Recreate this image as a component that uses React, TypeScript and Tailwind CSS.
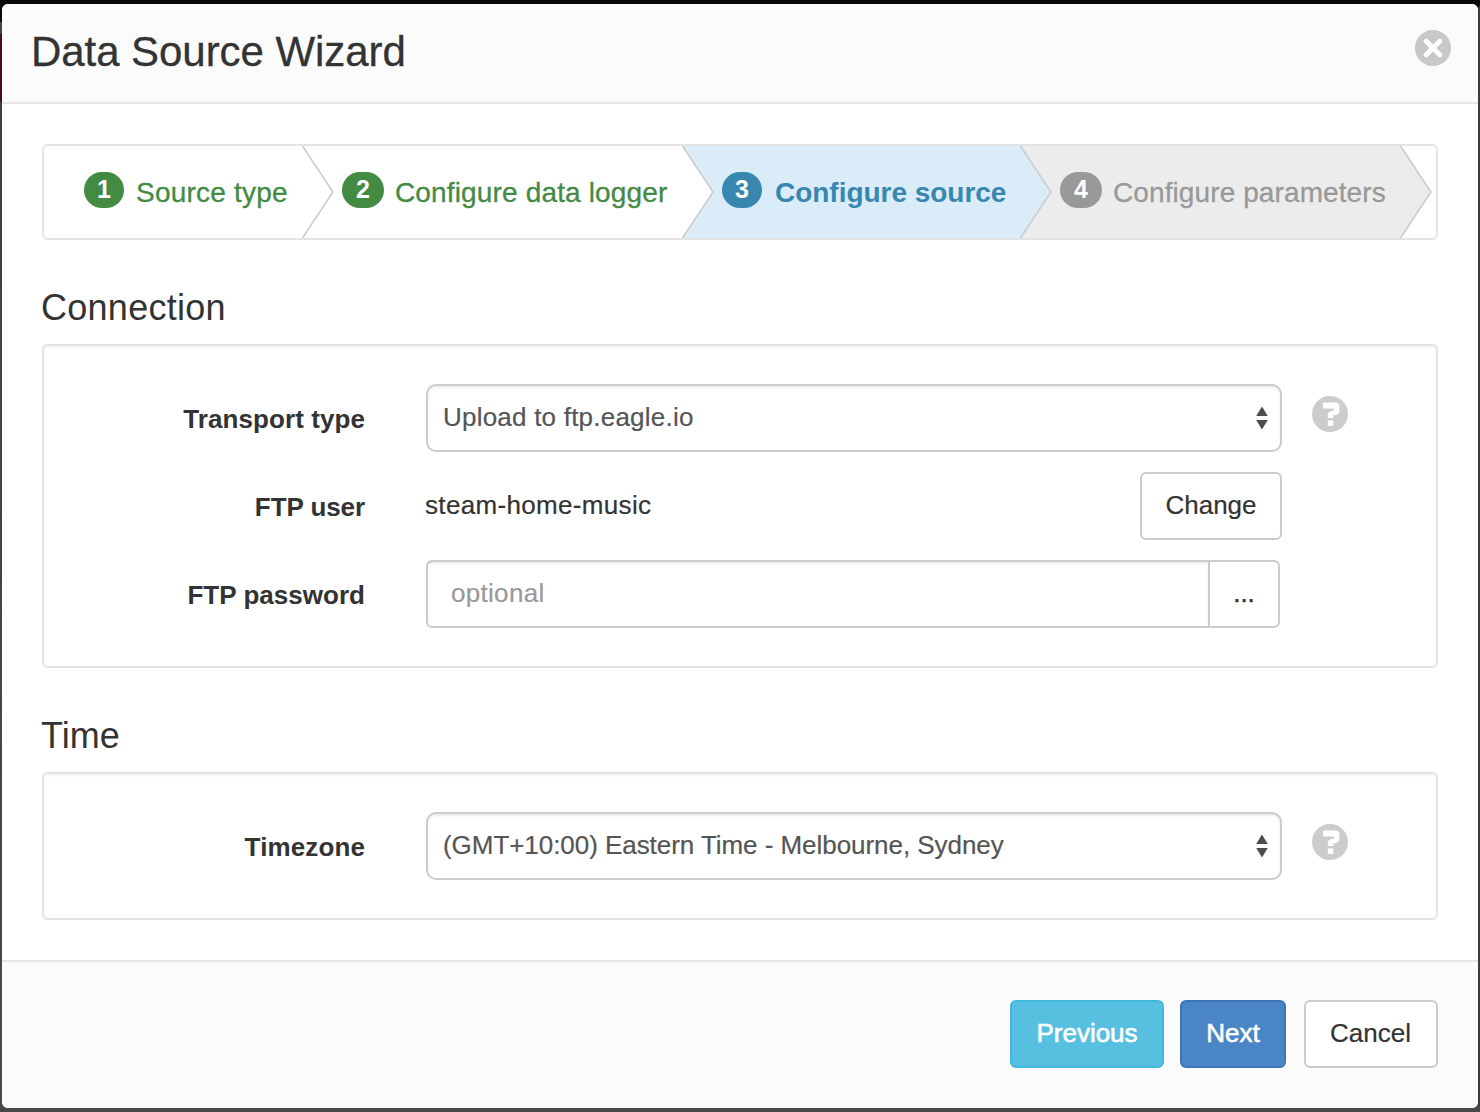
import React from "react";

type Step = {
  n: number;
  label: string;
  box: string;
  badge: string;
  text: string;
  fill: string;
  next: string;
};

const steps: Step[] = [
  { n: 1, label: "Source type", box: "w-[258px] pl-[40px] bg-white", badge: "w-[40px] bg-[#438a43] mr-[12px]", text: "text-[#438a43] tracking-[0.22px] [-webkit-text-stroke:0.3px]", fill: "#ffffff", next: "#ffffff" },
  { n: 2, label: "Configure data logger", box: "w-[348px] pl-[8px] bg-white", badge: "w-[42px] bg-[#438a43] mr-[11px]", text: "text-[#438a43] tracking-[0.15px] [-webkit-text-stroke:0.3px]", fill: "#ffffff", next: "#d9ecf8" },
  { n: 3, label: "Configure source", box: "w-[306px] pl-[8px] bg-[#d9ecf8]", badge: "w-[40px] bg-[#3887b0] mr-[13px]", text: "text-[#3887b0] font-bold tracking-[-0.03px]", fill: "#d9ecf8", next: "#ececec" },
  { n: 4, label: "Configure parameters", box: "w-[348px] pl-[8px] bg-[#ececec]", badge: "w-[42px] bg-[#999999] mr-[11px]", text: "text-[#999999] tracking-[0.1px] [-webkit-text-stroke:0.3px]", fill: "#ececec", next: "#ffffff" },
];

function Chevron({ fill, next }: { fill: string; next: string }) {
  return (
    <svg width="32" height="92" viewBox="0 0 32 92" className="shrink-0">
      <rect width="32" height="92" fill={next} />
      <path d="M0 0H0.5L31 46L0.5 92H0Z" fill={fill} />
      <path d="M0.5 0L31 46L0.5 92" fill="none" stroke="#cccccc" strokeWidth="1.6" />
    </svg>
  );
}

function Help() {
  return (
    <svg width="36" height="36" viewBox="0 0 36 36" className="ml-[30px] mb-[8px] shrink-0">
      <circle cx="18" cy="18" r="18" fill="#cccccc" />
      <path d="M11 6.6H25L27.4 9V16.4L24.4 19.2H21.4V22H15.8V17.6L18.6 15H21.6V12.4H11Z" fill="#fff" />
      <path d="M15.8 24.4H21.2V30H15.8Z" fill="#fff" />
    </svg>
  );
}

function Select({ value, className }: { value: string; className: string }) {
  return (
    <div className="flex h-[68px] w-[856px] items-center justify-between rounded-[10px] border-2 border-[#cccccc] bg-white pr-[12px] pl-[15px] shadow-[inset_0_2px_2px_rgba(0,0,0,0.075)]">
      <span className={"mb-[2px] text-[26px] text-[#555555] " + className}>{value}</span>
      <svg width="12" height="24" viewBox="0 0 12 24">
        <path d="M6 0.5L11.8 10H0.2ZM6 23.5L11.8 14H0.2Z" fill="#4d4d4d" />
      </svg>
    </div>
  );
}

function Row({ label, className, children }: { label: string; className: string; children: React.ReactNode }) {
  return (
    <div className="flex h-[68px] items-center">
      <div className={"mt-[2px] mr-[61px] w-[321px] text-right text-[26px] font-bold text-[#333333] " + className}>{label}</div>
      {children}
    </div>
  );
}

export default function App() {
  return (
    <div className="h-[1112px] w-[1480px] overflow-hidden bg-[linear-gradient(#0a0a0a_22px,#444_22px,#444_34px,#4a0d14_34px,#4a0d14_102px,#404040_102px,#484848)] px-[2px] pt-[4px] font-['Liberation_Sans',Arial,sans-serif] whitespace-nowrap">
      <div className="flex h-[1104px] flex-col overflow-hidden rounded-[6px] bg-white shadow-[1476px_0_0_#3c3c3c]">
        <header className="flex h-[100px] items-center justify-between border-b-2 border-[#e5e5e5] bg-[#fbfbfb] pr-[27px] pb-[3px] pl-[29px]">
          <h1 className="text-[42px] tracking-[-0.06px] text-[#333333] [-webkit-text-stroke:0.3px]">Data Source Wizard</h1>
          <svg width="36" height="36" viewBox="0 0 36 36" className="mb-[7px]">
            <circle cx="18" cy="18" r="18" fill="#c8c8c8" />
            <path d="M11.2 11.2L24.8 24.8M24.8 11.2L11.2 24.8" stroke="#fff" strokeWidth="5" strokeLinecap="round" />
          </svg>
        </header>

        <main className="flex h-[856px] flex-col px-[40px] pt-[40px]">
          <nav className="flex h-[96px] shrink-0 overflow-hidden rounded-[6px] border-2 border-[#e3e3e3] bg-white">
            {steps.map((s) => (
              <React.Fragment key={s.n}>
                <div className={"flex shrink-0 items-center " + s.box}>
                  <span className={"mb-[4px] flex h-[36px] items-center justify-center rounded-[20px] pb-[1px] text-[25px] font-bold text-white " + s.badge}>{s.n}</span>
                  <span className={"mt-[2px] text-[28px] " + s.text}>{s.label}</span>
                </div>
                <Chevron fill={s.fill} next={s.next} />
              </React.Fragment>
            ))}
          </nav>

          <h2 className="mt-[48px] -ml-[1px] h-[56px] text-[36px] leading-[40px] tracking-[0.27px] text-[#333333]">Connection</h2>
          <section className="flex h-[324px] shrink-0 flex-col gap-[20px] rounded-[6px] border-2 border-[#e3e3e3] pt-[38px] shadow-[inset_0_2px_2px_rgba(0,0,0,0.04)]">
            <Row label="Transport type" className="tracking-[0.08px]">
              <Select value="Upload to ftp.eagle.io" className="tracking-[0.22px] [-webkit-text-stroke:0.2px]" />
              <Help />
            </Row>
            <Row label="FTP user" className="tracking-[-0.08px]">
              <div className="flex w-[856px] items-center justify-between">
                <span className="-ml-[1px] mb-[2px] text-[26px] tracking-[0.33px] text-[#333333] [-webkit-text-stroke:0.2px]">steam-home-music</span>
                <button className="h-[68px] w-[142px] rounded-[6px] border-2 border-[#cccccc] bg-white pb-[2px] text-[26px] text-[#333333] [-webkit-text-stroke:0.2px]">Change</button>
              </div>
            </Row>
            <Row label="FTP password" className="tracking-[0.03px]">
              <div className="flex h-[68px] w-[854px] rounded-[6px] border-2 border-[#cccccc] bg-white">
                <div className="flex w-[780px] items-center pb-[2px] pl-[23px] text-[26px] tracking-[0.3px] text-[#999999] shadow-[inset_0_2px_2px_rgba(0,0,0,0.075)] [-webkit-text-stroke:0.2px]">optional</div>
                <div className="flex flex-1 items-center justify-center border-l-2 border-[#cccccc] pb-[2px] text-[26px] text-[#333333] [-webkit-text-stroke:0.5px]">...</div>
              </div>
            </Row>
          </section>

          <h2 className="mt-[48px] -ml-[1px] h-[56px] text-[36px] leading-[40px] text-[#333333]">Time</h2>
          <section className="flex h-[148px] shrink-0 flex-col rounded-[6px] border-2 border-[#e3e3e3] pt-[38px] shadow-[inset_0_2px_2px_rgba(0,0,0,0.04)]">
            <Row label="Timezone" className="tracking-[0.12px]">
              <Select value="(GMT+10:00) Eastern Time - Melbourne, Sydney" className="tracking-[-0.05px] [-webkit-text-stroke:0.2px]" />
              <Help />
            </Row>
          </section>
        </main>

        <footer className="flex h-[148px] items-start justify-end border-t-2 border-[#e5e5e5] bg-[#fbfbfb] pt-[38px] pr-[40px] text-[26px]">
          <button className="mr-[16px] h-[68px] w-[154px] rounded-[6px] border-2 border-[#41b7dc] bg-[#57c0e0] pb-[2px] text-white [-webkit-text-stroke:0.6px]">Previous</button>
          <button className="mr-[18px] h-[68px] w-[106px] rounded-[6px] border-2 border-[#3d76b8] bg-[#4a86c5] pb-[2px] text-white [-webkit-text-stroke:0.6px]">Next</button>
          <button className="h-[68px] w-[134px] rounded-[6px] border-2 border-[#cccccc] bg-white pr-[1px] pb-[2px] text-[#333333] [-webkit-text-stroke:0.2px]">Cancel</button>
        </footer>
      </div>
    </div>
  );
}
